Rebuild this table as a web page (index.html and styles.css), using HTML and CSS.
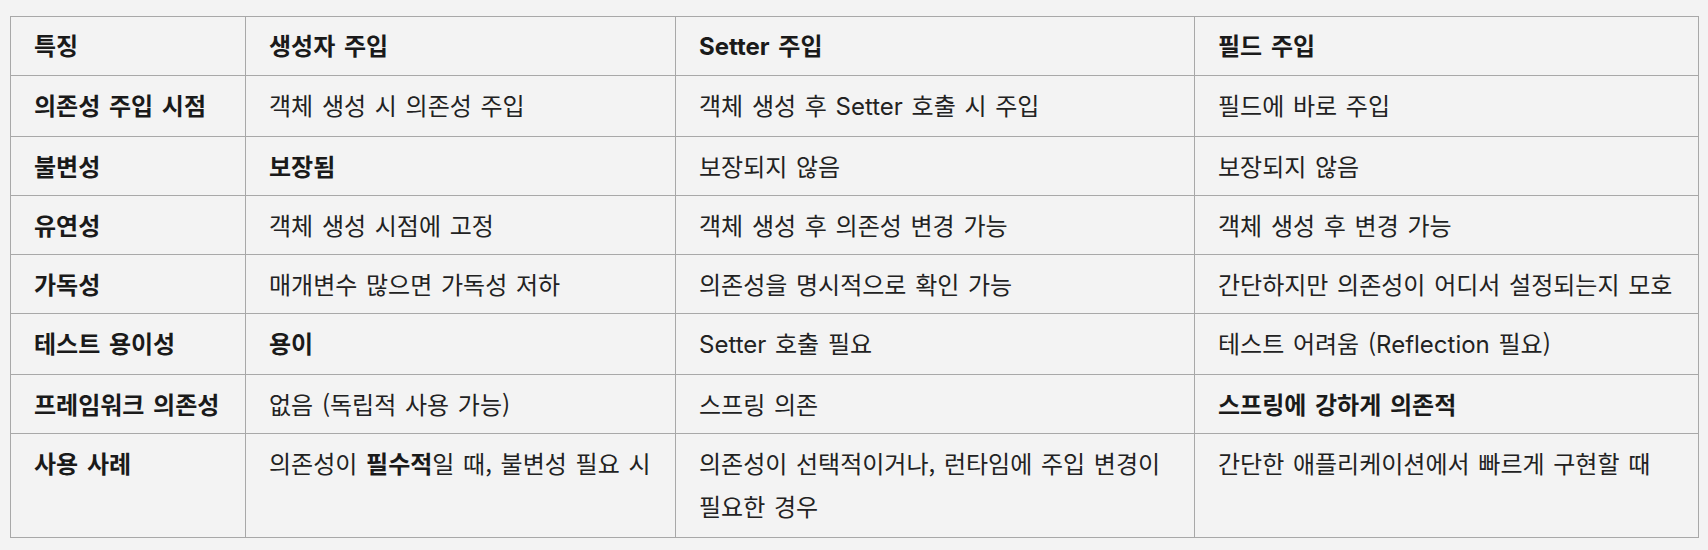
FILE: index.html
```html
<!DOCTYPE html>
<html lang="ko">
<head>
<meta charset="utf-8">
<title>의존성 주입 비교</title>
<link rel="stylesheet" href="styles.css">
</head>
<body>
<table class="cmp">
  <colgroup>
    <col class="c1"><col class="c2"><col class="c3"><col class="c4">
  </colgroup>
  <thead>
    <tr>
      <th>특징</th>
      <th>생성자 주입</th>
      <th><span class="en">Setter</span> 주입</th>
      <th>필드 주입</th>
    </tr>
  </thead>
  <tbody>
    <tr>
      <td class="key">의존성 주입 시점</td>
      <td>객체 생성 시 의존성 주입</td>
      <td>객체 생성 후 <span class="en">Setter</span> 호출 시 주입</td>
      <td>필드에 바로 주입</td>
    </tr>
    <tr>
      <td class="key">불변성</td>
      <td><strong>보장됨</strong></td>
      <td>보장되지 않음</td>
      <td>보장되지 않음</td>
    </tr>
    <tr>
      <td class="key">유연성</td>
      <td>객체 생성 시점에 고정</td>
      <td>객체 생성 후 의존성 변경 가능</td>
      <td>객체 생성 후 변경 가능</td>
    </tr>
    <tr>
      <td class="key">가독성</td>
      <td>매개변수 많으면 가독성 저하</td>
      <td>의존성을 명시적으로 확인 가능</td>
      <td>간단하지만 의존성이 어디서 설정되는지 모호</td>
    </tr>
    <tr>
      <td class="key">테스트 용이성</td>
      <td><strong>용이</strong></td>
      <td><span class="en">Setter</span> 호출 필요</td>
      <td>테스트 어려움 (<span class="en">Reflection</span> 필요)</td>
    </tr>
    <tr>
      <td class="key">프레임워크 의존성</td>
      <td>없음 (독립적 사용 가능)</td>
      <td>스프링 의존</td>
      <td><strong>스프링에 강하게 의존적</strong></td>
    </tr>
    <tr class="tall">
      <td class="key">사용 사례</td>
      <td>의존성이 <strong>필수적</strong>일 때, 불변성 필요 시</td>
      <td>의존성이 선택적이거나, 런타임에 주입 변경이 필요한 경우</td>
      <td>간단한 애플리케이션에서 빠르게 구현할 때</td>
    </tr>
  </tbody>
</table>
</body>
</html>
```

FILE: styles.css
```css
html, body {
  margin: 0;
  background: #f3f3f3;
}
body {
  padding: 16px 10px;
  font-family: "Noto Sans CJK KR", "Noto Sans", sans-serif;
  font-size: 24px;
  line-height: 43px;
  color: #222222;
  word-spacing: 2px;
}
.cmp {
  width: 1688px;
  border-collapse: collapse;
  table-layout: fixed;
  border: 1px solid #a8a8a8;
}
.c1 { width: 235px; }
.c2 { width: 430px; }
.c3 { width: 519px; }
.c4 { width: 504px; }
.cmp th,
.cmp td {
  border: 1px solid #a8a8a8;
  padding: 7px 4px 8px 23px;
  text-align: left;
  vertical-align: top;
  word-break: keep-all;
}
.cmp th {
  padding-top: 6px;
  padding-bottom: 7px;
  font-weight: 700;
  color: #1a1a1a;
}
.cmp .tall td {
  padding-bottom: 10px;
}
.cmp td.key,
.cmp strong {
  font-weight: 700;
  color: #1a1a1a;
}
.en {
  font-family: "Inter", "Noto Sans", sans-serif;
  word-spacing: 0;
}
```
